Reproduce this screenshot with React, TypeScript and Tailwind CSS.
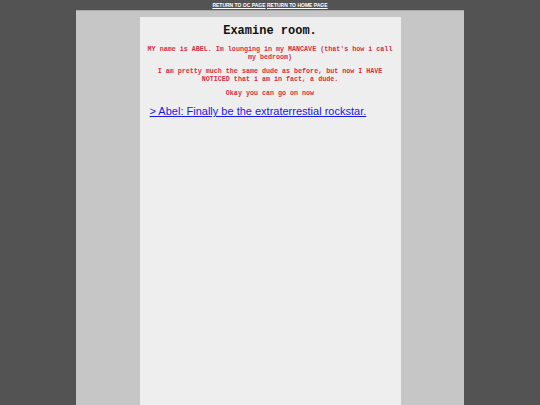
export default function App() {
  return (
    <div className="min-h-screen bg-[#535353] font-['Liberation_Sans',Arial,sans-serif]">
      <div className="h-[10px] text-center text-[5px] font-bold leading-[10px] text-white">
        <a href="#" className="underline">RETURN TO OC PAGE</a>{" "}
        <a href="#" className="underline">RETURN TO HOME PAGE</a>
      </div>
      <div className="mx-auto flex min-h-[395px] w-[388px] flex-col border-t border-[#a9a9a9] bg-[#c6c6c6] pt-[6px]">
        <div className="mx-auto w-[261px] flex-1 bg-[#eeeeee] px-[6px] pt-[7px]">
          <h1 className="text-center font-['Liberation_Mono','Courier_New',monospace] text-[12px] font-bold leading-[14px] text-[#111111]">
            Examine room.
          </h1>
          <div className="mt-[7px] text-center font-['Liberation_Mono','Courier_New',monospace] text-[6.7px] font-bold leading-[8px] text-[#d42e4c]">
            <p className="mb-[6px]">
              MY name is ABEL. Im lounging in my MANCAVE (that's how i call my bedroom)
            </p>
            <p className="mb-[6px]">
              I am pretty much the same dude as before, but now I HAVE NOTICED that i am in fact, a dude.
            </p>
            <p>Okay you can go on now</p>
          </div>
          <div className="mt-[8px] pl-[4px] text-[11px] leading-[13px]">
            <a href="#" className="text-[#1a1ae6] underline">
              &gt; Abel: Finally be the extraterrestial rockstar.
            </a>
          </div>
        </div>
      </div>
    </div>
  );
}
